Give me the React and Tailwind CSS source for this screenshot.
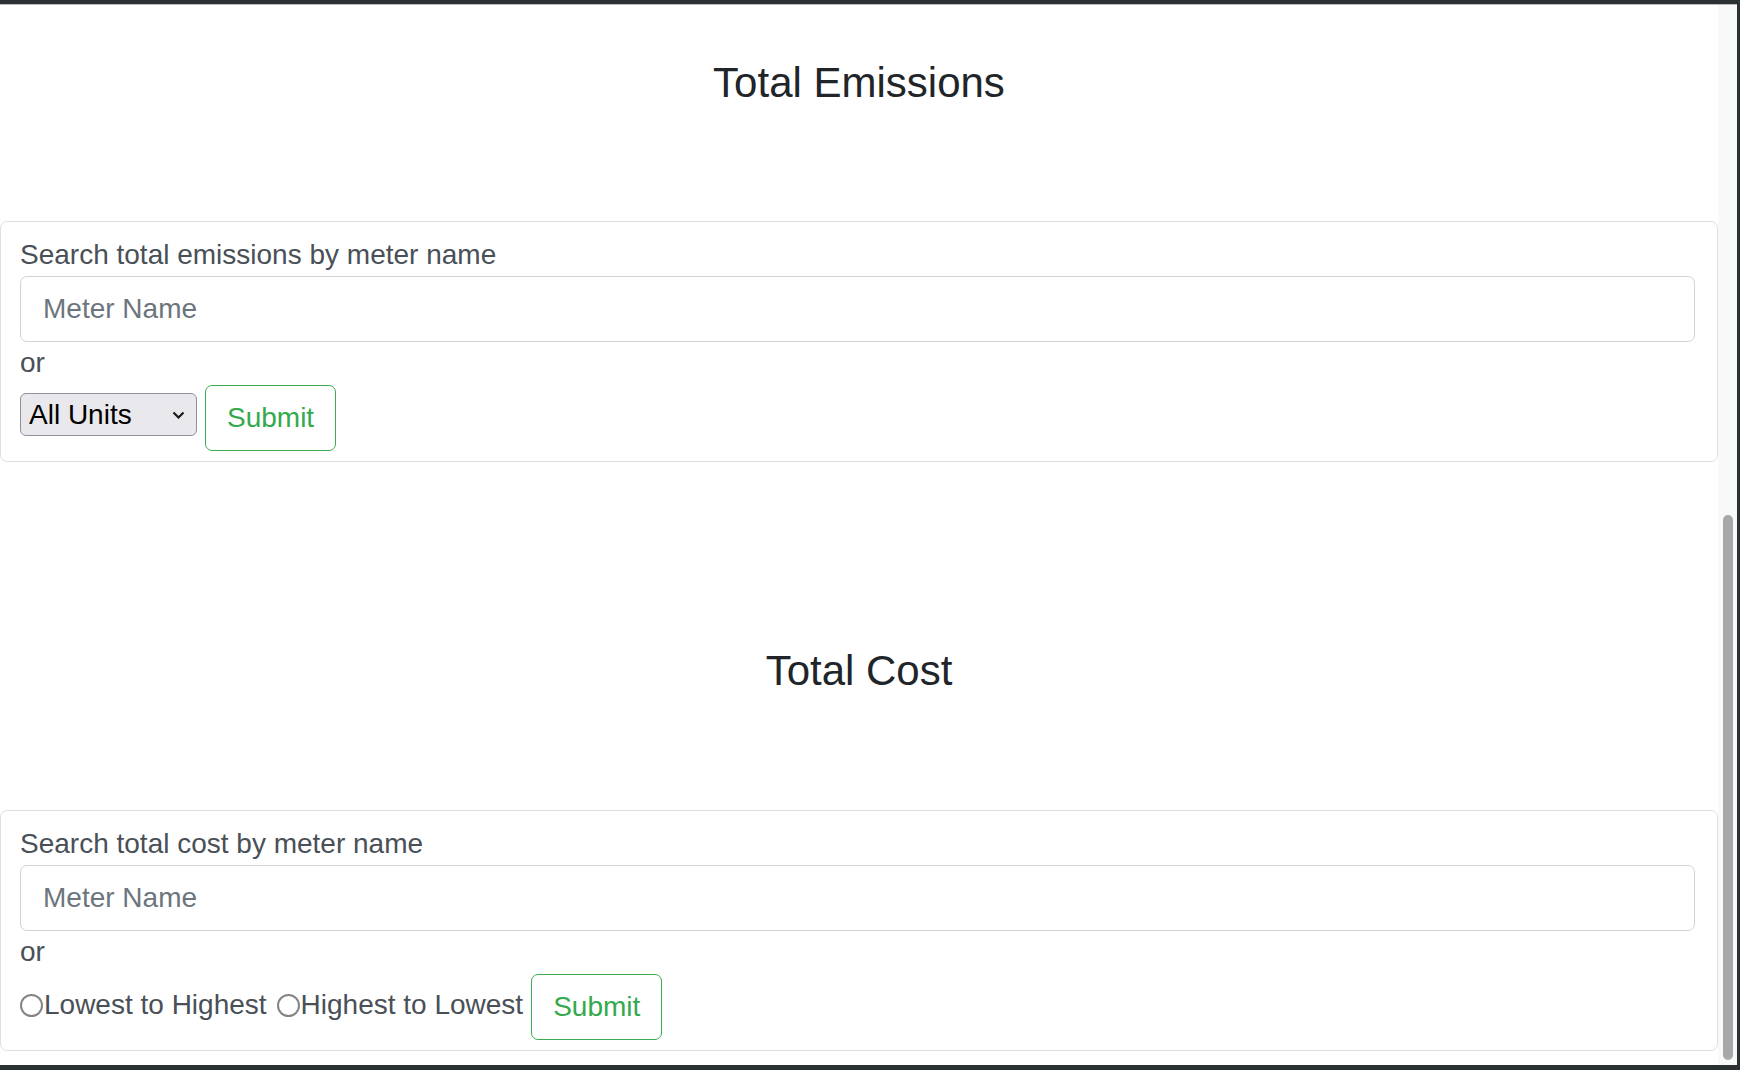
import { useState } from "react";

function SearchCard({ label, children }) {
  return (
    <div className="rounded-[7px] border border-[#dcdfe3] bg-white pt-[12px] pb-[10px] pl-[19px] pr-[22px]">
      <div className="text-[28px] leading-[42px] text-[#495057]">{label}</div>
      <input
        type="text"
        placeholder="Meter Name"
        className="block h-[66px] w-full rounded-[7px] border border-[#ced4da] bg-white px-[22px] text-[28px] text-[#495057] outline-none placeholder:text-[#6c757d]"
      />
      <div className="text-[28px] leading-[42px] text-[#495057]">or</div>
      <div className="mt-px flex items-start">{children}</div>
    </div>
  );
}

function SubmitButton({ className = "" }) {
  return (
    <button
      type="button"
      className={`h-[66px] rounded-[7px] border border-[#3bab52] bg-white px-[21px] text-[28px] text-[#34a94d] ${className}`}
    >
      Submit
    </button>
  );
}

function Radio({ name, label, checked, onChange, className = "" }) {
  return (
    <label className={`mt-[10px] flex items-center text-[28px] leading-[42px] text-[#495057] ${className}`}>
      <input
        type="radio"
        name={name}
        checked={checked}
        onChange={onChange}
        className="m-0 h-[23px] w-[23px] appearance-none rounded-full border-2 border-[#858585] bg-white checked:border-[7px] checked:border-[#0075ff]"
      />
      <span className="ml-px">{label}</span>
    </label>
  );
}

export default function App() {
  const [order, setOrder] = useState(null);

  return (
    <div
      className="flex h-[1070px] w-full flex-col bg-[#2b3033] pt-[4px] pr-[3px] pb-[5px]"
      style={{ fontFamily: '"Liberation Sans", Arial, sans-serif' }}
    >
      <div className="flex flex-1 border-t border-[#b9bcbf] bg-white">
        <main className="w-[1718px] shrink-0">
          <h4 className="mt-[53px] text-center text-[42px] font-normal leading-[50px] text-[#212529]">
            Total Emissions
          </h4>
          <div className="mt-[113px]">
            <SearchCard label="Search total emissions by meter name">
              <div className="relative mt-[8px]">
                <select className="block h-[43px] w-[177px] appearance-none rounded-[6px] border border-[#8f8f9d] bg-[#e9e9ed] pl-[8px] text-[28px] text-black outline-none">
                  <option>All Units</option>
                  <option>kWh</option>
                  <option>Therms</option>
                </select>
                <svg
                  className="pointer-events-none absolute right-[12px] top-[18px]"
                  width="13"
                  height="8"
                  viewBox="0 0 13 8"
                  fill="none"
                >
                  <path d="M1.5 1.5 6.5 6.5 11.5 1.5" stroke="#1a1a1a" strokeWidth="2.2" />
                </svg>
              </div>
              <SubmitButton className="ml-[8px]" />
            </SearchCard>
          </div>

          <h4 className="mt-[184px] text-center text-[42px] font-normal leading-[50px] text-[#212529]">
            Total Cost
          </h4>
          <div className="mt-[114px]">
            <SearchCard label="Search total cost by meter name">
              <Radio
                name="order"
                label="Lowest to Highest"
                checked={order === "asc"}
                onChange={() => setOrder("asc")}
              />
              <Radio
                name="order"
                label="Highest to Lowest"
                checked={order === "desc"}
                onChange={() => setOrder("desc")}
                className="ml-[10px]"
              />
              <SubmitButton className="ml-[8px]" />
            </SearchCard>
          </div>
        </main>
        <div className="flex flex-1 flex-col bg-[#f9f9f9] pt-[510px] pb-[5px] pl-[5px] pr-[4px]">
          <div className="flex-1 rounded-full bg-[#a6a8aa]" />
        </div>
      </div>
    </div>
  );
}
